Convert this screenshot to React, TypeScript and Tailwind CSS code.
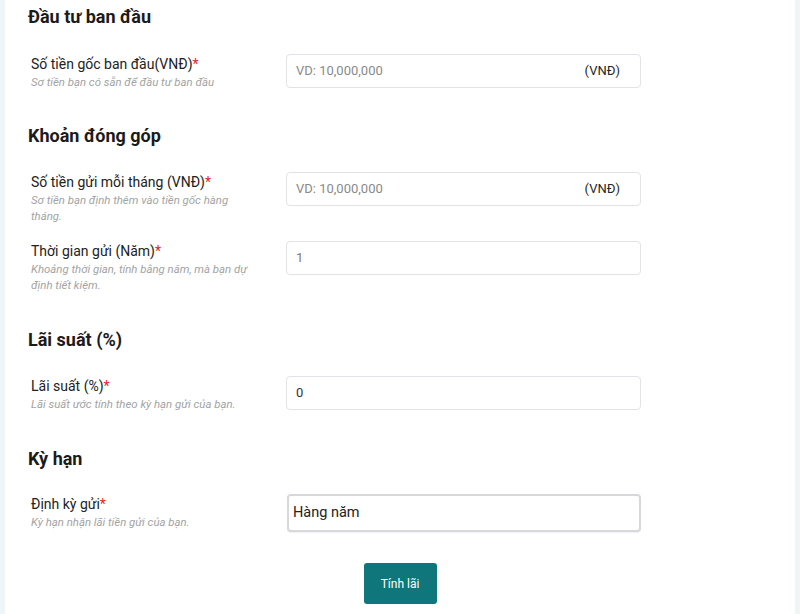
const font = { fontFamily: 'Roboto, "Noto Sans", sans-serif' };

function Field({
  label,
  hint,
  children,
}: {
  label: string;
  hint: string;
  children: React.ReactNode;
}) {
  return (
    <div className="flex items-start">
      <div className="w-[258px] shrink-0 pl-[3px] pr-[31px]">
        <div className="text-[14px] leading-[20px] text-[#222]">
          {label}
          <span className="text-[#e02424]">*</span>
        </div>
        <div className="text-[11.4px] italic leading-[16px] text-[#a3a3a3]">{hint}</div>
      </div>
      {children}
    </div>
  );
}

function TextInput({ placeholder, value, suffix }: { placeholder?: string; value?: string; suffix?: boolean }) {
  return (
    <div className="flex h-[34px] w-[355px] items-center rounded-[4px] border border-[#e1e3e6] bg-white pl-[9px] pr-[20px] text-[13px]">
      {value ? (
        <span className={value === '1' ? 'text-[#7a7a7a]' : 'text-[#333]'}>{value}</span>
      ) : (
        <span className="text-[#8a8a8a]">{placeholder}</span>
      )}
      {suffix && <span className="ml-auto text-[#262626]">(VNĐ)</span>}
    </div>
  );
}

// margins differ slightly per section, so they come in from the caller
function Heading({ children, className }: { children: React.ReactNode; className: string }) {
  return <h2 className={`${className} text-[18px] font-bold leading-[24px] text-[#1b1b1b]`}>{children}</h2>;
}

export default function App() {
  return (
    <div className="h-[614px] w-[800px] overflow-hidden bg-[#eef6f8] pl-[5px] pr-[5px]" style={font}>
      <div className="h-full bg-white pl-[23px] pt-[5px]">
        <Heading className="mb-[25px]">Đầu tư ban đầu</Heading>
        <Field label="Số tiền gốc ban đầu(VNĐ)" hint="Sơ tiền bạn có sẵn để đầu tư ban đầu">
          <TextInput placeholder="VD: 10,000,000" suffix />
        </Field>

        <Heading className="mt-[34px] mb-[24px]">Khoản đóng góp</Heading>
        <div className="flex flex-col gap-[17px]">
          <Field label="Số tiền gửi mỗi tháng (VNĐ)" hint="Sơ tiền bạn định thêm vào tiền gốc hàng tháng.">
            <TextInput placeholder="VD: 10,000,000" suffix />
          </Field>
          <Field label="Thời gian gửi (Năm)" hint="Khoảng thời gian, tính bằng năm, mà bạn dự định tiết kiệm.">
            <TextInput value="1" />
          </Field>
        </div>

        <Heading className="mt-[35px] mb-[24px]">Lãi suất (%)</Heading>
        <Field label="Lãi suất (%)" hint="Lãi suất ước tính theo kỳ hạn gửi của bạn.">
          <TextInput value="0" />
        </Field>

        <Heading className="mt-[35px] mb-[23px]">Kỳ hạn</Heading>
        <Field label="Định kỳ gửi" hint="Kỳ hạn nhận lãi tiền gửi của bạn.">
          <div className="ml-[1px] flex h-[38px] w-[354px] items-center rounded-[4px] border-2 border-[#d6d8db] bg-white pl-[4px] text-[14.5px] text-[#222] shadow-[0_1px_1px_rgba(0,0,0,0.06)]">
            Hàng năm
          </div>
        </Field>

        <div className="mt-[31px] flex justify-center pr-[23px]">
          <button className="h-[41px] w-[73px] rounded-[3px] bg-[#0f777b] text-[12px] text-white">
            Tính lãi
          </button>
        </div>
      </div>
    </div>
  );
}
